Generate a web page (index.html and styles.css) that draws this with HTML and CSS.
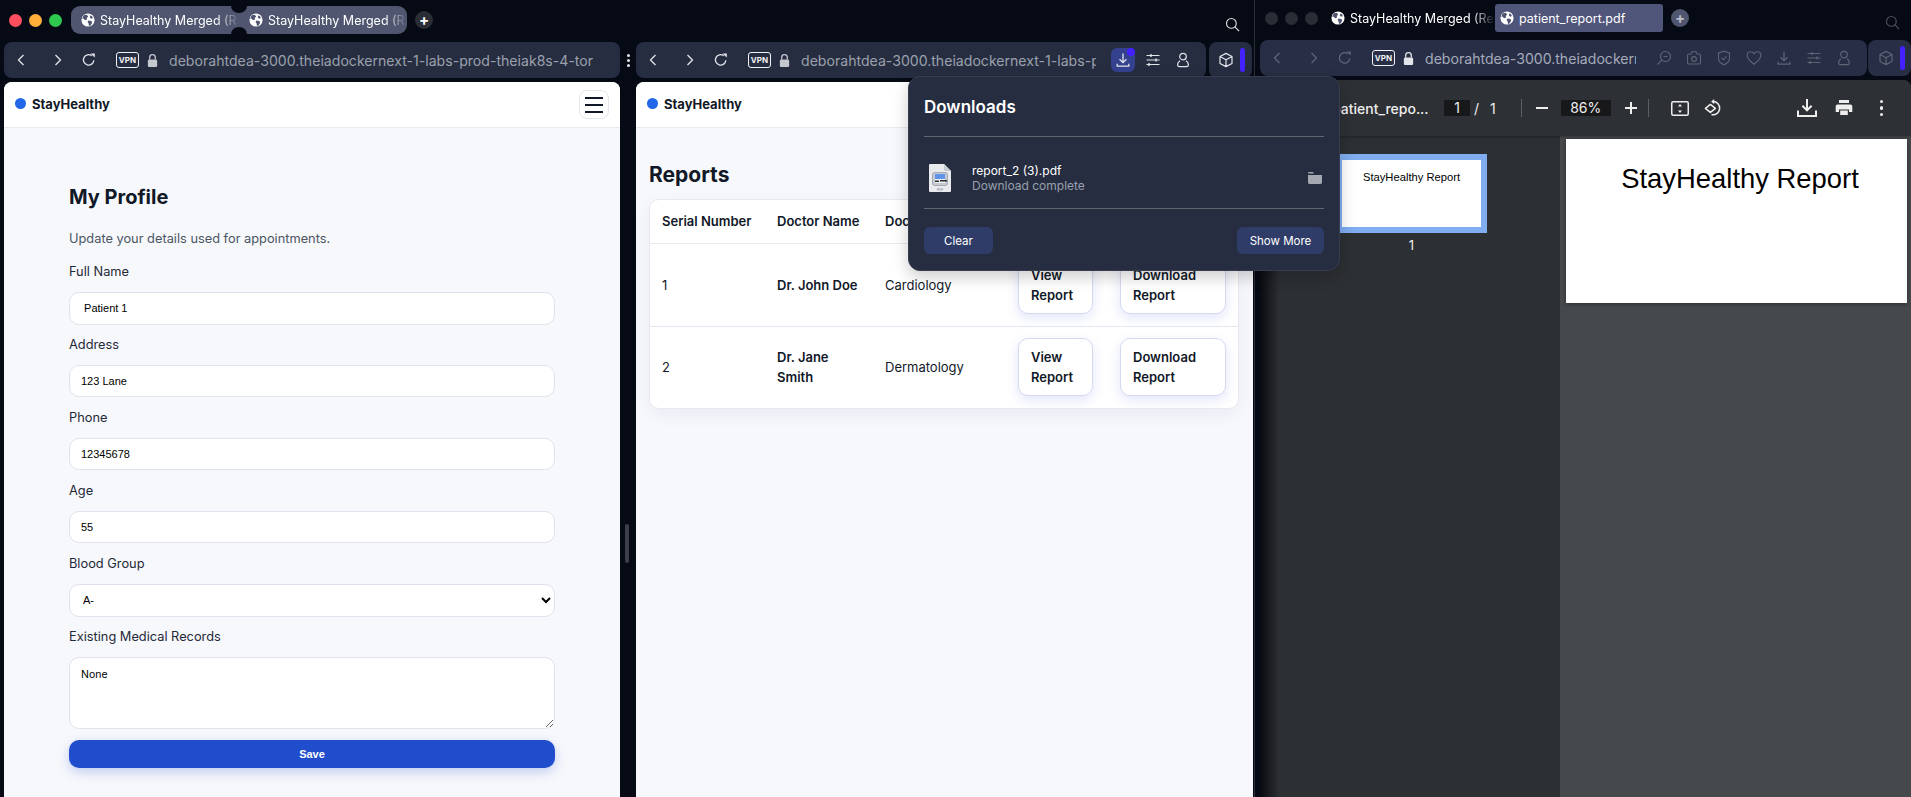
FILE: index.html
```html
<!DOCTYPE html>
<html lang="en">

<head>
    <meta charset="UTF-8">
    <meta name="viewport" content="width=device-width, initial-scale=1.0">
    <title>StayHealthy Merged</title>
    <link rel="stylesheet" href="styles.css">
</head>

<body>
<svg class="sprites" width="0" height="0">
    <symbol id="i-globe" viewBox="0 0 16 16">
        <circle cx="8" cy="8" r="7.5" fill="#fff"/>
        <path d="M3 2.6 6.6 2 8.2 4 6.6 5.6 7 7.4 4.8 8.2 2.6 6.4 1.4 6.6ZM8.6 8.6l3.4.6.8 1.8-2 3.2-1.6.6-.6-3-1.2-1.4ZM11 2.6l2.4 2-.4 1.6-2 .2-1-1.6Z" fill="#50566f"/>
    </symbol>
    <symbol id="i-back" viewBox="0 0 16 16"><path d="M10.5 3 5.5 8l5 5" fill="none" stroke="currentColor" stroke-width="1.3"/></symbol>
    <symbol id="i-fwd" viewBox="0 0 16 16"><path d="M5.5 3l5 5-5 5" fill="none" stroke="currentColor" stroke-width="1.3"/></symbol>
    <symbol id="i-reload" viewBox="0 0 16 16">
        <path d="M12.8 8.2A5.2 5.2 0 1 1 10.8 3.8" fill="none" stroke="currentColor" stroke-width="1.3"/>
        <path d="M9.6 1.4h4.2v4.2Z" fill="currentColor"/>
    </symbol>
    <symbol id="i-lock" viewBox="0 0 14 16">
        <path d="M4 7V4.6a3 3 0 0 1 6 0V7" fill="none" stroke="currentColor" stroke-width="1.4"/>
        <rect x="2" y="7" width="10" height="8" rx="1.4" fill="currentColor"/>
    </symbol>
    <symbol id="i-search" viewBox="0 0 16 16">
        <circle cx="6.8" cy="6.8" r="5.2" fill="none" stroke="currentColor" stroke-width="1.2"/>
        <path d="m10.6 10.6 4.4 4.4" stroke="currentColor" stroke-width="1.3"/>
    </symbol>
    <symbol id="i-download" viewBox="0 0 16 16">
        <path d="M8 1.5v9M4.5 7.2 8 10.7l3.5-3.5M2.200 11.800v2.400h11.600v-2.400" fill="none" stroke="currentColor" stroke-width="1.3"/>
    </symbol>
    <symbol id="i-sliders" viewBox="0 0 16 16">
        <path d="M1.5 3.5h13M1.5 8h13M1.5 12.5h13" stroke="currentColor" stroke-width="1.1"/>
        <path d="M6 2v3M11 6.500v3M4 11v3" stroke="currentColor" stroke-width="1.4"/>
    </symbol>
    <symbol id="i-person" viewBox="0 0 16 16">
        <circle cx="8" cy="4.600" r="3.300" fill="none" stroke="currentColor" stroke-width="1.200"/>
        <path d="M5 8.800C3.400 9.800 2.600 11.200 2.600 12.800c0 1.200.8 1.900 1.800 1.900h7.200c1 0 1.800-.7 1.800-1.900 0-1.600-.8-3-2.400-4" fill="none" stroke="currentColor" stroke-width="1.200"/>
    </symbol>
    <symbol id="i-cube" viewBox="0 0 16 16">
        <path d="M8 1.400 14 4.500v7L8 14.600 2 11.500v-7ZM2 4.500 8 7.800l6-3.300M8 7.800v6.800" fill="none" stroke="currentColor" stroke-width="1.2" stroke-linejoin="round"/>
    </symbol>
    <symbol id="i-zoom" viewBox="0 0 16 16">
        <circle cx="9.500" cy="6.500" r="5" fill="none" stroke="currentColor" stroke-width="1.100"/>
        <path d="m5.800 10.200L1.500 14.500M7.500 6.500h4" stroke="currentColor" stroke-width="1.100"/>
    </symbol>
    <symbol id="i-camera" viewBox="0 0 16 16">
        <path d="M1.500 5.500a1.500 1.500 0 0 1 1.500-1.500h1.800L6 1.800h4L11.200 4H13a1.500 1.500 0 0 1 1.500 1.500v7A1.500 1.500 0 0 1 13 14H3a1.500 1.500 0 0 1-1.500-1.500Z" fill="none" stroke="currentColor" stroke-width="1.100"/>
        <circle cx="8" cy="9" r="2.400" fill="none" stroke="currentColor" stroke-width="1.100"/>
    </symbol>
    <symbol id="i-shield" viewBox="0 0 16 16">
        <path d="M8 1.200 13.500 3v5.500c0 3-2.500 5-5.500 6.300C5 13.500 2.500 11.500 2.500 8.500V3Z" fill="none" stroke="currentColor" stroke-width="1.100"/>
        <path d="m5.600 8 1.800 1.800 3-3.400" fill="none" stroke="currentColor" stroke-width="1.100"/>
    </symbol>
    <symbol id="i-heart" viewBox="0 0 16 16">
        <path d="M8 14.200C4 11 1.200 8.500 1.200 5.400 1.200 3.200 2.900 1.800 4.700 1.800 6.100 1.800 7.300 2.600 8 3.800c.7-1.200 1.900-2 3.300-2 1.800 0 3.500 1.400 3.500 3.600 0 3.100-2.800 5.600-6.800 8.800Z" fill="none" stroke="currentColor" stroke-width="1.100"/>
    </symbol>
    <symbol id="i-folder" viewBox="0 0 14 12">
        <path d="M0 1.400A1.400 1.400 0 0 1 1.400 0h3.400l1.400 1.600H0ZM0 3h14v7.600a1.400 1.400 0 0 1-1.400 1.400H1.400A1.400 1.400 0 0 1 0 10.600Z" fill="currentColor"/>
    </symbol>
</svg>

<div class="desktop">
    <!-- left window, two panes side by side -->
    <div class="window window-main">
        <div class="tabstrip">
            <span class="dot dot-red"></span>
            <span class="dot dot-amber"></span>
            <span class="dot dot-green"></span>
            <div class="tabgroup">
                <div class="tab"><svg class="globe"><use href="#i-globe"/></svg><span class="tab-text">StayHealthy Merged (R</span></div>
                <div class="tab tab-joined"><svg class="globe"><use href="#i-globe"/></svg><span class="tab-text">StayHealthy Merged (R</span></div>
            </div>
            <span class="newtab">+</span>
            <svg class="strip-search"><use href="#i-search"/></svg>
        </div>

        <div class="split">
            <div class="barrow">
                <div class="addrbar addrbar-wide">
                    <span class="navcell nav-back"><svg class="ico"><use href="#i-back"/></svg></span>
                    <span class="navcell nav-fwd"><svg class="ico"><use href="#i-fwd"/></svg></span>
                    <span class="navcell nav-reload"><svg class="ico"><use href="#i-reload"/></svg></span>
                    <span class="vpn">VPN</span>
                    <span class="navcell nav-lock"><svg class="ico-lock"><use href="#i-lock"/></svg></span>
                    <span class="url">deborahtdea-3000.theiadockernext-1-labs-prod-theiak8s-4-tor</span>
                </div>
            </div>
            <div class="kebab"><i></i><i></i><i></i></div>
            <div class="barrow">
                <div class="addrbar addrbar-tools">
                    <span class="navcell nav-back"><svg class="ico"><use href="#i-back"/></svg></span>
                    <span class="navcell nav-fwd"><svg class="ico"><use href="#i-fwd"/></svg></span>
                    <span class="navcell nav-reload"><svg class="ico"><use href="#i-reload"/></svg></span>
                    <span class="vpn">VPN</span>
                    <span class="navcell nav-lock"><svg class="ico-lock"><use href="#i-lock"/></svg></span>
                    <span class="url">deborahtdea-3000.theiadockernext-1-labs-p</span>
                    <span class="dl-btn"><svg class="ico"><use href="#i-download"/></svg></span>
                    <span class="tool tool-first"><svg class="ico"><use href="#i-sliders"/></svg></span>
                    <span class="tool"><svg class="ico"><use href="#i-person"/></svg></span>
                </div>
                <div class="extbox">
                    <svg class="ico"><use href="#i-cube"/></svg>
                    <span class="extbar"></span>
                </div>
            </div>

            <div class="pane">
                <div class="site-head">
                    <div class="brand"><span class="brand-dot"></span>StayHealthy</div>
                    <div class="burger"><i></i><i></i><i></i></div>
                </div>
                <form class="profile">
                    <h2>My Profile</h2>
                    <p class="muted">Update your details used for appointments.</p>
                    <div class="field">
                        <label>Full Name</label>
                        <input type="text" value=" Patient 1">
                    </div>
                    <div class="field">
                        <label>Address</label>
                        <input type="text" value="123 Lane">
                    </div>
                    <div class="field">
                        <label>Phone</label>
                        <input type="text" value="12345678">
                    </div>
                    <div class="field">
                        <label>Age</label>
                        <input type="text" value="55">
                    </div>
                    <div class="field">
                        <label>Blood Group</label>
                        <select><option>A-</option></select>
                    </div>
                    <div class="field">
                        <label>Existing Medical Records</label>
                        <textarea>None</textarea>
                    </div>
                    <button class="save" type="button">Save</button>
                </form>
            </div>
            <div class="gutter"><span class="handle"></span></div>
            <div class="pane">
                <div class="site-head">
                    <div class="brand"><span class="brand-dot"></span>StayHealthy</div>
                </div>
                <div class="reports">
                    <h1>Reports</h1>
                    <div class="card">
                        <table>
                            <colgroup>
                                <col class="c-serial"><col class="c-doctor"><col class="c-spec"><col class="c-view"><col class="c-down">
                            </colgroup>
                            <thead>
                                <tr><th>Serial Number</th><th>Doctor Name</th><th>Doctor Speciality</th><th>View Report</th><th>Download Report</th></tr>
                            </thead>
                            <tbody>
                                <tr>
                                    <td>1</td>
                                    <td><b>Dr. John Doe</b></td>
                                    <td>Cardiology</td>
                                    <td><button class="rowbtn rowbtn-view" type="button">View Report</button></td>
                                    <td><button class="rowbtn rowbtn-down" type="button">Download Report</button></td>
                                </tr>
                                <tr>
                                    <td>2</td>
                                    <td><b>Dr. Jane Smith</b></td>
                                    <td>Dermatology</td>
                                    <td><button class="rowbtn rowbtn-view" type="button">View Report</button></td>
                                    <td><button class="rowbtn rowbtn-down" type="button">Download Report</button></td>
                                </tr>
                            </tbody>
                        </table>
                    </div>
                </div>
            </div>
        </div>
    </div>

    <!-- right window, pdf viewer, not focused -->
    <div class="window window-pdf">
        <div class="tabstrip tabstrip-pdf">
            <span class="dot dot-off"></span>
            <span class="dot dot-off"></span>
            <span class="dot dot-off"></span>
            <div class="tab tab-plain"><svg class="globe"><use href="#i-globe"/></svg><span class="tab-text">StayHealthy Merged (Re</span></div>
            <div class="tab tab-active"><svg class="globe"><use href="#i-globe"/></svg><span>patient_report.pdf</span></div>
            <span class="newtab newtab-off">+</span>
            <svg class="strip-search strip-search-off"><use href="#i-search"/></svg>
        </div>
        <div class="barrow barrow-pdf">
            <div class="addrbar addrbar-pdf">
                <span class="navcell nav-back dim"><svg class="ico"><use href="#i-back"/></svg></span>
                <span class="navcell nav-fwd dim"><svg class="ico"><use href="#i-fwd"/></svg></span>
                <span class="navcell nav-reload dim"><svg class="ico"><use href="#i-reload"/></svg></span>
                <span class="vpn">VPN</span>
                <span class="navcell nav-lock lock-light"><svg class="ico-lock"><use href="#i-lock"/></svg></span>
                <span class="url url-pdf">deborahtdea-3000.theiadockern</span>
                <span class="tool dim tool-pdf-first"><svg class="ico"><use href="#i-zoom"/></svg></span>
                <span class="tool dim"><svg class="ico"><use href="#i-camera"/></svg></span>
                <span class="tool dim"><svg class="ico"><use href="#i-shield"/></svg></span>
                <span class="tool dim"><svg class="ico"><use href="#i-heart"/></svg></span>
                <span class="tool dim"><svg class="ico"><use href="#i-download"/></svg></span>
                <span class="tool dim"><svg class="ico"><use href="#i-sliders"/></svg></span>
                <span class="tool dim"><svg class="ico"><use href="#i-person"/></svg></span>
            </div>
            <div class="extbox extbox-pdf">
                <svg class="ico dim"><use href="#i-cube"/></svg>
                <span class="extbar"></span>
            </div>
        </div>
        <div class="viewer">
            <div class="pdfbar">
                <span class="pdf-title">patient_repo...</span>
                <span class="pagebox">1</span>
                <span class="slash">/</span>
                <span class="pagetotal">1</span>
                <span class="vsep vsep-a"></span>
                <span class="zoomsign zoom-minus"></span>
                <span class="zoombox">86%</span>
                <span class="zoomsign zoom-plus"></span>
                <span class="vsep vsep-b"></span>
                <svg class="pdf-ico pdf-fit" viewBox="0 0 18 15">
                    <rect x=".75" y=".75" width="16.500" height="13.500" rx="1.500" fill="none" stroke="#eee" stroke-width="1.500"/>
                    <path d="M9 3l2 2.400H7ZM9 12l2-2.400H7Z" fill="#eee"/>
                </svg>
                <svg class="pdf-ico pdf-rotate" viewBox="0 0 18 18">
                    <path d="M9 2.600a6.600 6.600 0 1 1-1.500 13" fill="none" stroke="#eee" stroke-width="1.500"/>
                    <path d="M10.200 0v5.200L7.200 2.600Z" fill="#eee"/>
                    <path d="M6.400 5.400 1.400 9.400l5 4 5-4Z" fill="none" stroke="#eee" stroke-width="1.500" stroke-linejoin="round"/>
                </svg>
                <svg class="pdf-ico pdf-down" viewBox="0 0 20 18">
                    <path d="M10 0v11M5.400 6.800 10 11.400l4.600-4.600" fill="none" stroke="#eee" stroke-width="2"/>
                    <path d="M1 11.500V17h18v-5.500" fill="none" stroke="#eee" stroke-width="2"/>
                </svg>
                <svg class="pdf-ico pdf-print" viewBox="0 0 18 18">
                    <path d="M4 1h10v3H4ZM2.500 5.500h13A1.800 1.800 0 0 1 17.300 7.300V13H14v-2.500H4V13H.7V7.300A1.800 1.800 0 0 1 2.500 5.500ZM5.200 11.500h7.600V16H5.200Z" fill="#eee"/>
                </svg>
                <span class="pdf-dots"><i></i><i></i><i></i></span>
            </div>
            <div class="pdfbody">
                <div class="thumbs">
                    <div class="thumb">StayHealthy Report</div>
                    <div class="thumb-num">1</div>
                </div>
                <div class="pages">
                    <div class="page">StayHealthy Report</div>
                </div>
            </div>
        </div>
    </div>

    <div class="downloads">
        <div class="dl-title">Downloads</div>
        <div class="dl-item">
            <svg class="dl-file" viewBox="0 0 22 28">
                <path d="M1 0h14l7 7v20a1 1 0 0 1-1 1H1a1 1 0 0 1-1-1V1a1 1 0 0 1 1-1Z" fill="#e8eaee"/>
                <path d="M15 0l7 7h-6a1 1 0 0 1-1-1Z" fill="#c6cad2"/>
                <rect x="3.500" y="8.500" width="15" height="13" rx="2" fill="#c5cad2" stroke="#8f959f" stroke-width=".7"/>
                <rect x="6" y="10" width="10" height="5" fill="#5f94e8"/>
                <rect x="6" y="15" width="10" height="4" fill="#eef0f3"/>
                <path d="M6 16.500h4v1.500H6ZM11 16h7v1.500h-7Z" fill="#26292f"/>
                <text x="11" y="26.500" text-anchor="middle" font-size="3" font-family="Liberation Sans, sans-serif" fill="#7d828c">PDF</text>
            </svg>
            <div class="dl-info">
                <div class="dl-name">report_2 (3).pdf</div>
                <div class="dl-state">Download complete</div>
            </div>
            <svg class="dl-folder"><use href="#i-folder"/></svg>
        </div>
        <div class="dl-actions">
            <button class="dl-action dl-clear" type="button">Clear</button>
            <button class="dl-action dl-more" type="button">Show More</button>
        </div>
    </div>
</div>
</body>

</html>
```

FILE: styles.css
```css
* {
    margin: 0;
    padding: 0;
    box-sizing: border-box;
}

html,
body {
    height: 100%;
    overflow: hidden;
    background: #060a14;
}

body {
    font-family: Inter, "Liberation Sans", sans-serif;
    color: #111827;
}

.sprites {
    position: absolute;
}

.desktop {
    position: relative;
    display: flex;
    width: 1911px;
    height: 797px;
}

.window {
    height: 797px;
    background: #060a14;
}

.window-main {
    width: 1255px;
    border-right: 1px solid #2b2e36;
}

.window-pdf {
    width: 656px;
    padding-left: 5px;
}

/* tab strip */
.tabstrip {
    position: relative;
    display: flex;
    align-items: center;
    height: 42px;
    padding: 0 0 2px 9px;
}

.dot {
    width: 13px;
    height: 13px;
    border-radius: 50%;
    margin-right: 7px;
}

.dot-red { background: #ff4f5e; }
.dot-amber { background: #ffb03b; }
.dot-green { background: #2fc94f; }
.dot-off { background: #2a2d36; }

.tabgroup {
    display: flex;
    margin-left: 2px;
}

.tab {
    position: relative;
    display: flex;
    align-items: center;
    height: 28px;
    width: 168px;
    padding-left: 10px;
    color: #fff;
    font-size: 12.5px;
    background: #50566f;
    white-space: nowrap;
    overflow: hidden;
}

.tab:first-child {
    border-radius: 9px 0 0 9px;
}

.tab-joined {
    border-radius: 0 9px 9px 0;
    overflow: visible;
}

.tab-joined::before,
.tab-joined::after {
    content: "";
    position: absolute;
    left: -8px;
    width: 16px;
    height: 14px;
    border-radius: 50%;
    background: #060a14;
}

.tab-joined::before { top: -7px; }
.tab-joined::after { bottom: -7px; }

.globe {
    flex: none;
    width: 14px;
    height: 14px;
    margin-right: 5px;
}

.tab-text {
    flex: 1;
    overflow: hidden;
    padding-right: 12px;
    -webkit-mask-image: linear-gradient(90deg, #000 84%, transparent 100%);
    mask-image: linear-gradient(90deg, #000 84%, transparent 100%);
}

.newtab {
    width: 18px;
    height: 18px;
    margin-left: 8px;
    border-radius: 50%;
    background: #2a2d36;
    color: #fff;
    font-size: 15px;
    font-weight: 700;
    line-height: 17px;
    text-align: center;
}

.strip-search {
    position: absolute;
    right: 14px;
    top: 17px;
    width: 15px;
    height: 15px;
    color: #d9dbe0;
}

.tabstrip-pdf {
    height: 40px;
    padding: 0 0 4px 5px;
}

.tab-plain {
    width: 170px;
    padding-left: 6px;
    background: transparent;
}

.tab-active {
    width: 168px;
    padding-left: 5px;
    border-radius: 3px;
    background: #50557a;
}

.newtab-off {
    background: #50566f;
    color: #b8bbc6;
}

.strip-search-off {
    top: 15px;
    right: 11px;
    color: #4c505c;
}

/* panes and bars */
.split {
    display: grid;
    grid-template-columns: 616px 16px 617px;
    grid-template-rows: 36px 715px;
    row-gap: 4px;
    padding-left: 4px;
}

.barrow {
    display: flex;
    gap: 3px;
}

.addrbar {
    display: flex;
    align-items: center;
    flex: 1;
    min-width: 0;
    height: 36px;
    border-radius: 8px;
    background: #272d40;
    color: #e3e5ea;
}

.addrbar-wide {
    padding-right: 26px;
}

.addrbar-tools {
    padding-right: 8px;
}

.navcell {
    display: flex;
    align-items: center;
    justify-content: center;
    flex: none;
    height: 16px;
}

.nav-back { width: 34px; }
.nav-fwd { width: 40px; }
.nav-reload { width: 22px; }
.nav-lock { width: 26px; color: #c5c8cf; }

.ico {
    display: block;
    width: 16px;
    height: 16px;
}

.ico-lock {
    display: block;
    width: 13px;
    height: 15px;
}

.vpn {
    flex: none;
    width: 23px;
    height: 16px;
    margin-left: 16px;
    border: 1px solid #f2f3f6;
    border-radius: 3px;
    color: #f2f3f6;
    font-size: 8px;
    font-weight: 700;
    line-height: 14px;
    text-align: center;
}

.url {
    flex: 1;
    min-width: 0;
    margin-left: 4px;
    overflow: hidden;
    color: #9aa1ad;
    font-size: 14.1px;
    white-space: nowrap;
}

.dl-btn {
    position: relative;
    display: flex;
    align-items: center;
    justify-content: center;
    flex: none;
    width: 24px;
    height: 24px;
    margin-left: 15px;
    border-radius: 6px;
    background: #33418f;
}

.dl-btn::after {
    content: "";
    position: absolute;
    top: 0;
    right: 0;
    width: 8px;
    height: 8px;
    border-radius: 50%;
    background: #4422ff;
}

.tool {
    display: flex;
    justify-content: center;
    flex: none;
    width: 30px;
}

.tool-first {
    margin-left: 3px;
}

.extbox {
    display: flex;
    align-items: center;
    flex: none;
    width: 43px;
    height: 36px;
    margin-right: 1px;
    padding-left: 9px;
    border-radius: 8px;
    background: #272d40;
    color: #e3e5ea;
}

.extbar {
    width: 5px;
    height: 24px;
    margin-left: 6px;
    border-radius: 3px;
    background: #4422ff;
}

.kebab {
    display: flex;
    flex-direction: column;
    align-items: center;
    justify-content: center;
    gap: 2px;
}

.kebab i {
    width: 3px;
    height: 3px;
    border-radius: 50%;
    background: #e3e5ea;
}

.gutter {
    display: flex;
    justify-content: center;
    padding: 442px 2px 0 0;
}

.handle {
    width: 4px;
    height: 39px;
    border-radius: 2px;
    background: #3a3f4b;
}

.pane {
    overflow: hidden;
    border-radius: 8px 8px 0 0;
    background: #f7f8fc;
}

.site-head {
    display: flex;
    align-items: center;
    justify-content: space-between;
    height: 46px;
    padding: 0 11px;
    background: #fff;
    border-bottom: 1px solid #e8eaf0;
}

.brand {
    display: flex;
    align-items: center;
    gap: 6px;
    margin-top: -2px;
    font-size: 13px;
    font-weight: 700;
}

.brand-dot {
    width: 11px;
    height: 11px;
    border-radius: 50%;
    background: #2167e8;
}

.burger {
    display: flex;
    flex-direction: column;
    align-items: center;
    justify-content: center;
    gap: 5px;
    width: 30px;
    height: 29px;
    border: 1px solid #e4e6ee;
    border-radius: 8px;
}

.burger i {
    width: 18px;
    height: 2px;
    background: #111827;
}

/* profile form */
.profile {
    width: 486px;
    margin-left: 65px;
    padding-top: 57px;
}

.profile h2 {
    font-size: 20px;
    font-weight: 700;
    line-height: 24px;
}

.muted {
    margin: 20px 0 13px;
    color: #4b5563;
    font-size: 12.8px;
    line-height: 20px;
}

.field {
    margin-bottom: 10.300px;
}

.field label {
    display: block;
    margin-bottom: 10px;
    color: #1f2937;
    font-size: 12.8px;
    line-height: 20px;
}

.field input,
.field select,
.field textarea {
    display: block;
    width: 100%;
    background: #fff;
    border: 1px solid #dfe3ee;
    border-radius: 10px;
    color: #000;
    font-family: "Liberation Sans", sans-serif;
    font-size: 11px;
    outline: none;
}

.field input {
    height: 32.600px;
    padding: 0 11px;
}

.field select {
    height: 33px;
    padding: 0 9px;
}

.field textarea {
    height: 72px;
    padding: 10px 11px;
    font-family: Inter, sans-serif;
    font-size: 10.500px;
}

.save {
    display: block;
    width: 100%;
    height: 28px;
    margin-top: 11px;
    border: 0;
    border-radius: 10px;
    background: #1f4dcc;
    box-shadow: 0 4px 12px rgba(31, 77, 204, .25);
    color: #fff;
    font-family: "Liberation Sans", sans-serif;
    font-size: 11px;
    font-weight: 700;
}

/* reports table */
.reports {
    padding: 0 13px;
}

.reports h1 {
    margin: 34px 0 11px;
    font-size: 21px;
    font-weight: 700;
    line-height: 26px;
}

.card {
    width: 590px;
    overflow: hidden;
    background: #fff;
    border: 1px solid #e8eaf0;
    border-radius: 10px;
    box-shadow: 0 6px 18px rgba(30, 50, 120, .06);
}

table {
    width: 100%;
    table-layout: fixed;
    border-collapse: collapse;
    font-size: 13px;
}

.c-serial { width: 115px; }
.c-doctor { width: 108px; }
.c-spec { width: 133px; }
.c-view { width: 102px; }
.c-down { width: 130px; }

th,
td {
    padding: 0 12px;
    text-align: left;
    vertical-align: middle;
    line-height: 20px;
}

th {
    height: 43px;
    font-weight: 600;
    border-bottom: 1px solid #e8eaf0;
}

tbody tr:first-child td {
    height: 83px;
    border-bottom: 1px solid #e3e6ee;
}

tbody tr:last-child td {
    height: 82px;
}

td b {
    font-weight: 600;
}

.rowbtn {
    display: block;
    height: 58px;
    padding: 0 12px;
    background: #fff;
    border: 1px solid #d5d9f0;
    border-radius: 10px;
    box-shadow: 0 4px 12px rgba(40, 70, 210, .14);
    color: #111827;
    font-family: Inter, sans-serif;
    font-size: 13px;
    font-weight: 600;
    line-height: 20px;
    text-align: left;
}

.rowbtn-view {
    width: 75px;
}

.rowbtn-down {
    width: 106px;
}

/* pdf window */
.barrow-pdf {
    gap: 1px;
}

.addrbar-pdf {
    padding-right: 8px;
    background: #282e45;
}

.url-pdf {
    color: #a5abba;
}

.lock-light {
    color: #e3e5ea;
}

.dim {
    color: #5f6475;
}

.tool-pdf-first {
    margin-left: 13px;
}

.extbox-pdf {
    width: 43px;
    margin-right: 0;
    padding-left: 10px;
    background: #282e45;
}

.viewer {
    height: 717px;
    margin-top: 4px;
    overflow: hidden;
    border-radius: 8px 8px 0 0;
    background: #46494c;
}

.pdfbar {
    position: relative;
    display: flex;
    align-items: center;
    height: 56px;
    padding-left: 72px;
    background: #2d3034;
    color: #eee;
    font-size: 14px;
    box-shadow: 0 1px 3px rgba(0, 0, 0, .3);
}

.pdf-title {
    width: 112px;
    font-weight: 500;
    white-space: nowrap;
}

.pagebox {
    width: 26px;
    height: 16px;
    background: #17181a;
    line-height: 16px;
    text-align: center;
}

.slash {
    margin-left: 4px;
}

.pagetotal {
    margin-left: 11px;
}

.vsep {
    width: 1px;
    height: 18px;
    background: #5c5f63;
}

.vsep-a {
    margin-left: 25px;
}

.vsep-b {
    margin-left: 11px;
}

.zoomsign {
    position: relative;
    width: 12px;
    height: 2px;
    background: #eee;
}

.zoom-minus {
    margin: 0 13px 0 14px;
}

.zoom-plus {
    margin-left: 14px;
}

.zoom-plus::after {
    content: "";
    position: absolute;
    left: 5px;
    top: -5px;
    width: 2px;
    height: 12px;
    background: #eee;
}

.zoombox {
    width: 50px;
    height: 16px;
    background: #17181a;
    line-height: 16px;
    text-align: center;
}

.pdf-ico {
    flex: none;
    width: 18px;
    height: 18px;
}

.pdf-fit {
    height: 15px;
    margin-left: 22px;
}

.pdf-rotate {
    margin-left: 15px;
}

.pdf-down {
    width: 20px;
    margin-left: 75px;
}

.pdf-print {
    margin-left: 18px;
}

.pdf-dots {
    display: flex;
    flex-direction: column;
    gap: 3px;
    margin-left: 27px;
}

.pdf-dots i {
    width: 3.500px;
    height: 3.500px;
    border-radius: 50%;
    background: #eee;
}

.pdfbody {
    display: flex;
    height: 661px;
}

.thumbs {
    flex: none;
    width: 300px;
    padding: 18px 0 0 76px;
    background: linear-gradient(90deg, #090b10, #2d3033 20px);
}

.thumb {
    width: 151px;
    height: 79px;
    padding-top: 10px;
    background: #fff;
    border: 6px solid #7fadf0;
    color: #000;
    font-family: "Liberation Sans", sans-serif;
    font-size: 11.200px;
    line-height: 14px;
    text-align: center;
}

.thumb-num {
    width: 151px;
    margin-top: 4px;
    color: #eee;
    font-size: 13px;
    line-height: 16px;
    text-align: center;
}

.pages {
    flex: 1;
    padding: 3px 4px 0 6px;
}

.page {
    height: 164px;
    padding: 22px 0 0 7px;
    background: #fff;
    box-shadow: 0 1px 4px rgba(0, 0, 0, .4);
    color: #000;
    font-family: "Liberation Sans", sans-serif;
    font-size: 27.400px;
    line-height: 36px;
    text-align: center;
}

/* downloads popup, lies over both windows */
.downloads {
    position: absolute;
    left: 908px;
    top: 76px;
    width: 432px;
    height: 195px;
    padding: 0 15px;
    background: #272d40;
    border: 1px solid #373d4d;
    border-radius: 12px;
    color: #fff;
    box-shadow: 0 6px 16px rgba(0, 0, 0, .2);
}

.dl-title {
    height: 60px;
    border-bottom: 1px solid #62656f;
    font-size: 17px;
    font-weight: 600;
    line-height: 61px;
}

.dl-item {
    display: flex;
    align-items: center;
    height: 72px;
    padding-top: 10px;
    border-bottom: 1px solid #62656f;
}

.dl-file {
    flex: none;
    width: 22px;
    height: 28px;
    margin-left: 5px;
}

.dl-info {
    flex: 1;
    margin-left: 21px;
    font-size: 12px;
    line-height: 15px;
}

.dl-state {
    color: #98a0ad;
}

.dl-folder {
    flex: none;
    width: 14px;
    height: 12px;
    margin-right: 2px;
    color: #a3a8b1;
}

.dl-actions {
    display: flex;
    justify-content: space-between;
    padding-top: 18px;
}

.dl-action {
    height: 27px;
    border: 0;
    border-radius: 6px;
    background: #303c68;
    color: #fff;
    font-family: Inter, sans-serif;
    font-size: 11.500px;
}

.dl-clear {
    width: 69px;
}

.dl-more {
    width: 87px;
}
```
